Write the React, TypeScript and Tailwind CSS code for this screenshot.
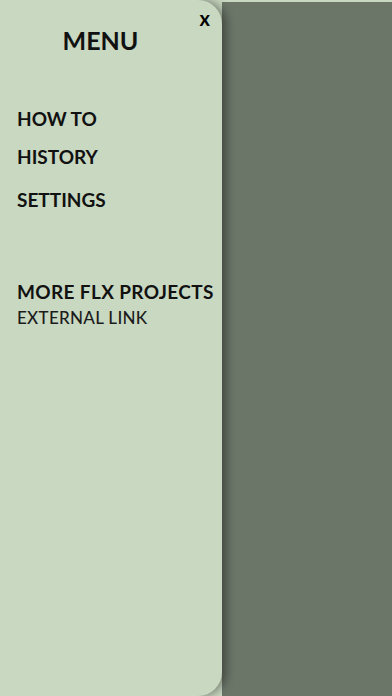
const App = () => {
    return (
        <div className="flex h-[696px] w-full bg-[#c9d8c1] font-['Lato',sans-serif]">
            <section className="relative z-10 flex h-full w-[222px] flex-col rounded-r-[24px] bg-[#c9d8c1] pl-[17px] pr-[38px] shadow-[4px_0_10px_rgba(0,0,0,0.4)]">
                <button className="absolute right-[12px] top-[8px] text-[20px] font-bold leading-none text-black">x</button>
                <h1 className="mt-[24px] text-center text-[25px] font-bold leading-[32px] text-[#111]">MENU</h1>
                <nav className="mt-[50px] flex flex-col whitespace-nowrap text-[19px] font-bold leading-[26px] text-[#111]">
                    <p>HOW TO</p>
                    <p className="mt-[12px]">HISTORY</p>
                    <p className="mt-[17px]">SETTINGS</p>
                </nav>
                <div className="mt-[66px] whitespace-nowrap text-[#111]">
                    <p className="text-[19px] font-bold leading-[26px] tracking-[0.35px]">MORE FLX PROJECTS</p>
                    <p className="mt-[2px] text-[17px] font-medium leading-[22px] tracking-[0.3px] text-[#1c1c1c]">EXTERNAL LINK</p>
                </div>
            </section>
            <div className="mt-[2px] flex-1 bg-[#6b7568]"></div>
        </div>
    )
}

export default App
